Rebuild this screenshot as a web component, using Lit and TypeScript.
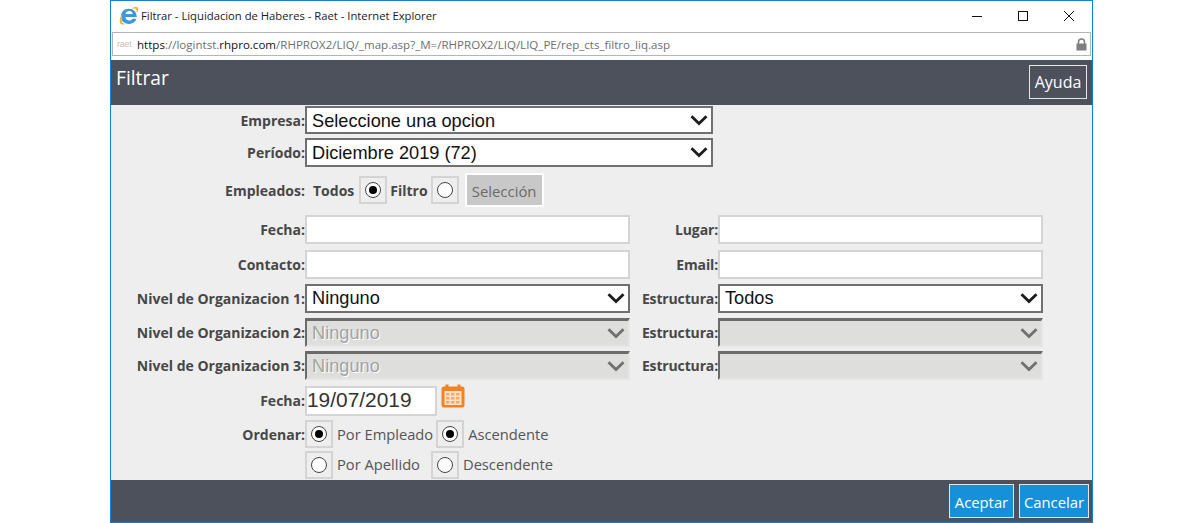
import { LitElement, html, css, svg } from "lit";
import { customElement } from "lit/decorators.js";

const chev = (dis = false) => html`<svg class="chev" width="18" height="11" viewBox="0 0 18 11"><path d="M1.500 1.200 L9 8.500 L16.500 1.200" fill="none" stroke="${dis ? "#707070" : "#1c1c1c"}" stroke-width="2.800"/></svg>`;

const ie = svg`<svg width="20" height="20" viewBox="0 0 20 20" class="ie">
  <path d="M1.800 10C2 5.800 5.400 2.700 9.800 2.700c4.800 0 7.900 3.300 8 8.300H6.400c.2 2.300 1.700 3.500 3.700 3.500 1.500 0 2.700-.6 3.500-1.800h3.900c-1.100 3.300-3.900 5.200-7.400 5.200-4.900 0-8.500-3.300-8.300-7.900zm4.700-1.900h7.200c-.2-1.900-1.600-3.100-3.500-3.100-2 0-3.400 1.200-3.700 3.100z" fill="#3a97dc"/>
  <path d="M3.600 7.200C1.300 10.800 0 14.600 1 17c.9 1.900 3.800 1.800 6.400.6-2.200.2-4.100-.2-4.600-1.800-.4-1.700.1-4.800.8-8.600z" fill="#f0b428"/>
  <path d="M12 2.600C15.200.8 18.200.5 19 2.100c.6 1.400-.2 3.300-1.300 4.900.1-1.700 0-3.100-.9-3.800-.9-.7-2.500-.6-4.800-.6z" fill="#f0b428"/>
</svg>`;

const cal = svg`<svg width="24" height="24" viewBox="0 0 24 24">
  <rect x="0.500" y="2.500" width="23" height="21" rx="2.500" fill="#f58220"/>
  <rect x="4.500" y="0.500" width="3" height="5" fill="#f58220"/><rect x="16.500" y="0.500" width="3" height="5" fill="#f58220"/>
  <rect x="3.500" y="7" width="17" height="14" fill="#fde3cc"/>
  <g fill="#f9a866">
    <rect x="5" y="9" width="3.500" height="2.500"/><rect x="10" y="9" width="3.500" height="2.500"/><rect x="15" y="9" width="3.500" height="2.500"/>
    <rect x="5" y="13" width="3.500" height="2.500"/><rect x="10" y="13" width="3.500" height="2.500"/><rect x="15" y="13" width="3.500" height="2.500"/>
    <rect x="5" y="17" width="3.500" height="2.500"/><rect x="10" y="17" width="3.500" height="2.500"/><rect x="15" y="17" width="3.500" height="2.500"/>
  </g>
</svg>`;

const radio = (on: boolean) => html`<span class="rbox"><span class="rc ${on ? "on" : ""}"></span></span>`;
const sel = (t: string, cls = "w325") => html`<div class="sel ${cls}"><span>${t}</span>${chev()}</div>`;
const dis = (t: string) => html`<div class="sel dis w325"><span>${t}</span>${chev(true)}</div>`;

@customElement("app-root")
export class AppRoot extends LitElement {
  static styles = css`
    :host { display: block; width: 1200px; height: 523px; background: #fff; overflow: hidden; }
    * { box-sizing: border-box; }
    .win { margin-left: 110px; width: 983px; height: 523px; border: 1px solid #1382d6; display: flex; flex-direction: column; background: #fff; font-family: "Open Sans", sans-serif; }
    .title { height: 31px; display: flex; align-items: center; padding: 0 0 2px 8px; color: #1a1a1a; flex: none; }
    .title .ie { margin-right: 2px; flex: none; }
    .title .txt { flex: 1; font-size: 11.250px; }
    .ctl { display: flex; align-items: center; }
    .ctl span { width: 46px; display: flex; justify-content: center; }
    .url { height: 24px; margin: 0 1px; border: 1px solid #b5b5b5; display: flex; align-items: center; padding-left: 4px; font-size: 11.550px; color: #6e6e6e; flex: none; }
    .url .raet { width: 20px; font-family: "Liberation Sans", sans-serif; font-size: 8.500px; color: #c9b8b0; flex: none; }
    .url b { font-weight: 400; color: #111; }
    .url .path { flex: 1; white-space: nowrap; }
    .url svg { margin-right: 3px; }
    .spacer { height: 4px; flex: none; }
    .head { height: 45px; background: #4d515c; display: flex; justify-content: space-between; flex: none; padding: 5px 5px 0 5px; }
    .head h1 { margin: 0; font-weight: 400; font-size: 19.200px; color: #fff; line-height: 25px; }
    .btn-h { height: 34px; width: 58px; border: 1px solid #e6e6e6; color: #fff; font-size: 16px; display: flex; align-items: center; justify-content: center; }
    .body { flex: 1; background: #eeeeee; padding-top: 1px; min-height: 0; }
    .row { display: flex; align-items: center; }
    .lab { width: 194px; text-align: right; font-weight: 700; font-size: 14px; color: #474747; white-space: nowrap; flex: none; }
    .lab2 { width: 88px; letter-spacing: -0.15px; }
    .lab.up { padding-bottom: 2px; }
    .sel { height: 29px; border: 2px solid #707070; background: #fff; display: flex; align-items: center; justify-content: space-between; padding: 0 5px; font-family: "Liberation Sans", sans-serif; font-size: 18.200px; color: #111; }
    .sel .chev { flex: none; margin-right: -2px; }
    .w408 { width: 408px; }
    .w408 span { padding-top: 2px; }
    .w408.top { height: 28px; }
    .w325 { width: 325px; }
    .sel.dis { border-style: solid; border-width: 3px 2px 2px 2px; border-color: #6b6b6b #e5e5e3 #e5e5e3 #6b6b6b; background: #dededc; color: #a3a3a3; text-shadow: 1px 1px 0 #fff; }
    .inp { height: 29px; width: 325px; border: 2px solid #d4d4d4; background: #fff; }
    .date { height: 30px; width: 132px; border: 2px solid #d4d4d4; background: #fff; font-family: "Liberation Sans", sans-serif; font-size: 20.900px; color: #333; line-height: 23px; flex: none; }
    .calw { margin-left: 4px; align-self: flex-start; height: 24px; margin-top: -2px; }
    .rbox { width: 28px; height: 28px; border: 2px solid #d4d4d4; display: inline-flex; align-items: center; justify-content: center; flex: none; vertical-align: top; }
    .rc { width: 16px; height: 16px; border-radius: 50%; border: 1px solid #444; background: #fff; display: flex; align-items: center; justify-content: center; }
    .rc.on::after { content: ""; width: 8px; height: 8px; border-radius: 50%; background: #000; }
    .t { font-size: 14.700px; color: #555; white-space: nowrap; margin-left: 4px; }
    .t.up { padding-bottom: 2px; }
    .tb { font-weight: 700; font-size: 14px; color: #474747; margin-left: 3px; }
    .tb.first { margin-left: 8px; }
    .sel-btn { width: 79px; height: 34px; border: 2px solid #fff; background: #c8c8c8; color: #6b6b6b; font-size: 14.900px; display: flex; align-items: center; justify-content: center; margin-left: 6px; padding-top: 2px; }
    .foot { height: 42px; background: #4d515c; display: flex; justify-content: flex-end; align-items: flex-start; gap: 5px; padding: 4px 3px 0 0; flex: none; }
    .b { height: 34px; background: #1690d8; border: 1px solid #dfe6ea; color: #fff; font-size: 14.800px; display: flex; align-items: center; justify-content: center; padding-top: 2px; }
    .acept { width: 65px; } .canc { width: 70px; }
    .m3 { margin-top: 3px; } .m4 { margin-top: 4px; } .m5 { margin-top: 5px; } .m6 { margin-top: 6px; } .m8 { margin-top: 8px; }
    .ml5 { margin-left: 5px; } .ml3 { margin-left: 3px; } .ml11 { margin-left: 11px; }
    .lh { display: inline-flex; }
  `;
  render() {
    return html`<div class="win">
      <div class="title">${ie}<span class="txt">Filtrar - Liquidacion de Haberes - Raet - Internet Explorer</span>
        <div class="ctl">
          <span><svg width="12" height="12" viewBox="0 0 12 12"><path d="M1 6.500H11" stroke="#111" fill="none"/></svg></span>
          <span><svg width="12" height="12" viewBox="0 0 12 12"><rect x="1.500" y="1.500" width="9" height="9" stroke="#111" fill="none"/></svg></span>
          <span><svg width="12" height="12" viewBox="0 0 12 12"><path d="M1 1L11 11M11 1L1 11" stroke="#111" fill="none"/></svg></span>
        </div>
      </div>
      <div class="url"><span class="raet">raet</span><span class="path"><b>https</b>://logintst.<b>rhpro.com</b>/RHPROX2/LIQ/_map.asp?_M=/RHPROX2/LIQ/LIQ_PE/rep_cts_filtro_liq.asp</span>
        <svg width="11" height="13" viewBox="0 0 11 13"><path d="M2.500 6V4a3 3 0 0 1 6 0v2" fill="none" stroke="#7f7f7f" stroke-width="1.500"/><rect x="0.500" y="5.500" width="10" height="7" fill="#7f7f7f"/></svg>
      </div>
      <div class="spacer"></div>
      <div class="head"><h1>Filtrar</h1><div class="btn-h">Ayuda</div></div>
      <div class="body">
        <div class="row"><span class="lab">Empresa:</span>${sel("Seleccione una opcion", "w408 top")}</div>
        <div class="row m4"><span class="lab">Período:</span>${sel("Diciembre 2019 (72)", "w408")}</div>
        <div class="row m6">
          <span class="lab">Empleados:</span><span class="tb first">Todos</span><span class="ml5 lh">${radio(true)}</span>
          <span class="tb">Filtro</span><span class="ml3 lh">${radio(false)}</span>
          <div class="sel-btn">Selección</div>
        </div>
        <div class="row m8"><span class="lab">Fecha:</span><div class="inp"></div><span class="lab lab2">Lugar:</span><div class="inp"></div></div>
        <div class="row m6"><span class="lab">Contacto:</span><div class="inp"></div><span class="lab lab2">Email:</span><div class="inp"></div></div>
        <div class="row m5"><span class="lab">Nivel de Organizacion 1:</span>${sel("Ninguno")}<span class="lab lab2">Estructura:</span>${sel("Todos")}</div>
        <div class="row m5"><span class="lab">Nivel de Organizacion 2:</span>${dis("Ninguno")}<span class="lab lab2">Estructura:</span>${dis("")}</div>
        <div class="row m4"><span class="lab">Nivel de Organizacion 3:</span>${dis("Ninguno")}<span class="lab lab2">Estructura:</span>${dis("")}</div>
        <div class="row m6"><span class="lab up">Fecha:</span><div class="date">19/07/2019</div><span class="calw">${cal}</span></div>
        <div class="row m4"><span class="lab">Ordenar:</span><span class="lh">${radio(true)}</span><span class="t">Por Empleado</span><span class="ml3 lh">${radio(true)}</span><span class="t">Ascendente</span></div>
        <div class="row m3"><span class="lab"></span><span class="lh">${radio(false)}</span><span class="t up">Por Apellido</span><span class="ml11 lh">${radio(false)}</span><span class="t up">Descendente</span></div>
      </div>
      <div class="foot"><div class="b acept">Aceptar</div><div class="b canc">Cancelar</div></div>
    </div>`;
  }
}
